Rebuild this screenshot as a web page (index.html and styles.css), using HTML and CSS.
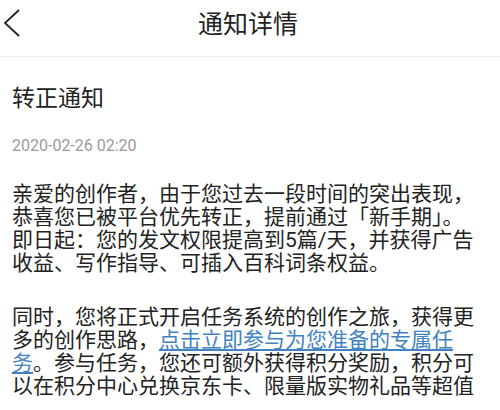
FILE: index.html
```html
<!DOCTYPE html>
<html lang="zh-CN">
<head>
  <meta charset="UTF-8" />
  <meta name="viewport" content="width=device-width, initial-scale=1.0" />
  <title>通知详情</title>
  <link rel="stylesheet" href="styles.css">
</head>
<body>
  <header class="topbar">
    <a class="back" href="#">
      <svg width="24" height="30" viewBox="0 0 24 30">
        <polyline points="19,2 5,15 19,28" fill="none" stroke="#222" stroke-width="1.8" />
      </svg>
    </a>
    <h1>通知详情</h1>
  </header>

  <div class="notice">
    <h2>转正通知</h2>
    <div class="date">2020-02-26 02:20</div>

    <p>亲爱的创作者，由于您过去一段时间的突出表现，<br>恭喜您已被平台优先转正，提前通过「新手期」。<br>即日起：您的发文权限提高到5篇/天，并获得广告<br>收益、写作指导、可插入百科词条权益。</p>

    <p>同时，您将正式开启任务系统的创作之旅，获得更<br>多的创作思路，<a href="#">点击立即参与为您准备的专属任<br>务</a>。参与任务，您还可额外获得积分奖励，积分可<br>以在积分中心兑换京东卡、限量版实物礼品等超值</p>
  </div>
</body>
</html>
```

FILE: styles.css
```css
body {
  margin: 0;
  background: #fff;
  color: #222;
  font-family: Roboto, "Noto Sans CJK SC", sans-serif;
  overflow: hidden;
}
.topbar {
  position: relative;
  height: 56px;
  display: flex;
  align-items: center;
  justify-content: center;
  border-bottom: 1px solid #ececec;
}
.topbar h1 {
  margin: 0;
  font-size: 25px;
  font-weight: normal;
  line-height: 30px;
  margin-top: -6px;
  margin-left: -4px;
}
.back {
  position: absolute;
  left: 0;
  top: 8px;
  display: block;
}
.notice {
  padding: 0 12px;
  white-space: nowrap;
}
.notice h2 {
  margin: 27px 0 0;
  font-size: 23px;
  font-weight: normal;
  line-height: 30px;
}
.date {
  margin-top: 22px;
  font-size: 16px;
  line-height: 20px;
  color: #9a9a9a;
}
.notice p {
  margin: 27px 0 0;
  font-size: 21px;
  line-height: 23px;
}
.notice p + p {
  margin-top: 31px;
}
.notice a {
  color: #4282c2;
  text-decoration: underline;
  text-underline-offset: 2px;
}
```
